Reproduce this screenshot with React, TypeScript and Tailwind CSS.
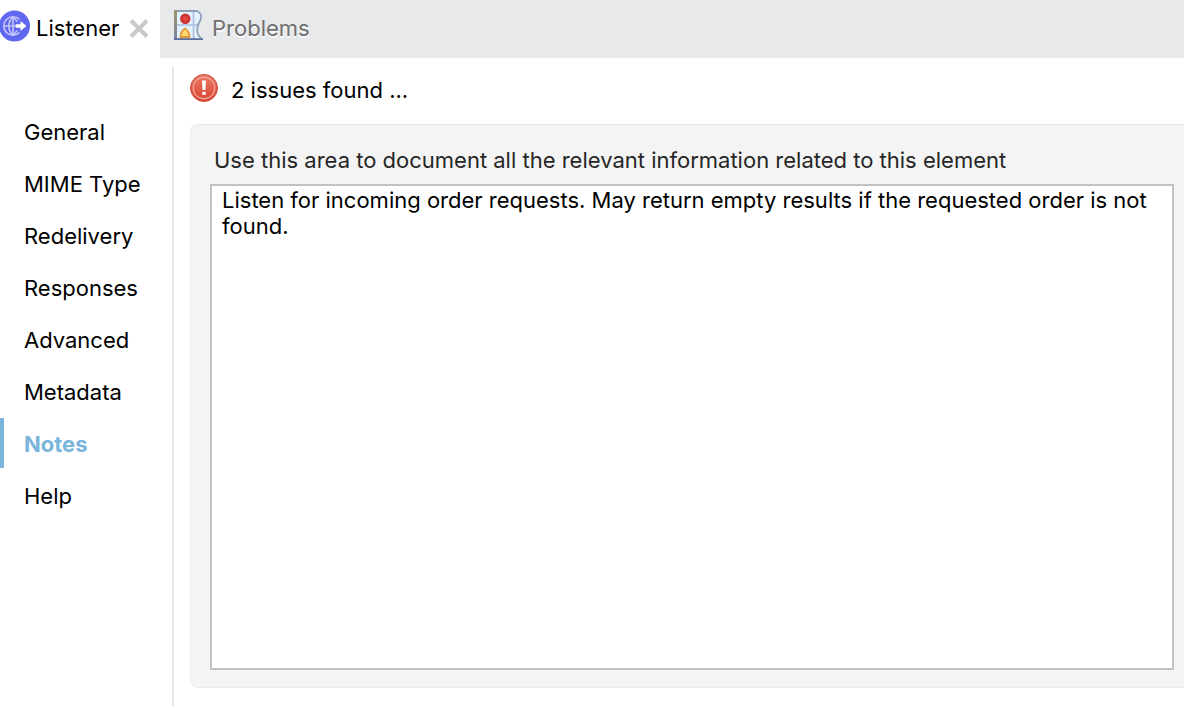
import { useState } from "react";

const sections = ["General", "MIME Type", "Redelivery", "Responses", "Advanced", "Metadata", "Notes", "Help"];

function ListenerIcon() {
    return (
        <svg className="-ml-px h-8 w-8 shrink-0" viewBox="0 0 32 32" fill="none" aria-hidden="true">
            <circle cx="15.5" cy="16" r="15.5" fill="#6068f0" />
            <g stroke="#c3c6fb" strokeWidth="1.6">
                <path d="M20.5 22.5A9.2 9.2 0 1 1 20.5 9.5" />
                <path d="M14 6.8c-5.6 5-5.6 13.4 0 18.4M14 6.8c2 1.600 3.400 3.400 4 5M14 25.200c2-1.600 3.400-3.400 4-5" />
                <path d="M14 6.800v18.400M5 16h11" />
            </g>
            <path d="M16.500 14.200h5v-3.200l6 5-6 5v-3.200h-5z" fill="#fff" />
        </svg>
    );
}

function ProblemsIcon() {
    return (
        <svg className="h-8 w-8 shrink-0" viewBox="0 0 32 32" fill="none" aria-hidden="true">
            <defs>
                <linearGradient id="page-edge" x1="0" y1="0" x2="0" y2="1">
                    <stop offset="0" stopColor="#9c9468" />
                    <stop offset="1" stopColor="#7c84a0" />
                </linearGradient>
                <radialGradient id="red-dot">
                    <stop offset="0" stopColor="#e8544e" />
                    <stop offset="1" stopColor="#c5282b" />
                </radialGradient>
            </defs>
            <path d="M1 1h22c6 3 4.500 8 2 12s-3 11 2 16H1z" fill="#e3f1fc" />
            <path d="M19.500 1v28M2 15h22" stroke="#a9bfe0" strokeWidth="1.600" />
            <path d="M2 1h21c6 3 4.500 8 2 12s-3 11 2 15" stroke="#8fa0bb" strokeWidth="1.800" />
            <path d="M0 0h3v30H0z" fill="url(#page-edge)" />
            <path d="M0 28.200h29V30H0z" fill="#596d9c" />
            <circle cx="11.300" cy="8.700" r="5.200" fill="url(#red-dot)" />
            <path d="M11 18.500c2.500 1.800 4.500 4.500 4.500 8.500h-9c0-4 2-6.700 4.500-8.500z" fill="#ffdc70" stroke="#e39a35" strokeWidth="1.800" strokeLinejoin="round" />
        </svg>
    );
}

function ErrorIcon() {
    return (
        <svg className="h-7 w-7 shrink-0" viewBox="0 0 28 28" fill="none" aria-hidden="true">
            <defs>
                <linearGradient id="error-fill" x1="0" y1="0" x2="0" y2="1">
                    <stop offset="0" stopColor="#ed7a65" />
                    <stop offset="1" stopColor="#d84434" />
                </linearGradient>
            </defs>
            <circle cx="14" cy="14" r="13.500" fill="url(#error-fill)" stroke="#cf4a3b" />
            <circle cx="14" cy="14" r="10.800" stroke="#f3a595" strokeWidth="1.200" />
            <path d="M12 6.500h4l-.6 9.500h-2.800z" fill="#fff" />
            <path d="M12.300 17.800h3.400v3h-3.400z" fill="#fff" />
        </svg>
    );
}

export default function App() {
    const [active, setActive] = useState("Notes");
    const [notes, setNotes] = useState(
        "Listen for incoming order requests. May return empty results if the requested order is not found."
    );

    return (
        <div className="flex min-h-screen flex-col bg-white font-['Inter',sans-serif] text-[22px] leading-[26px] text-black">
            <header className="flex h-[58px] bg-[#e8e9eb]">
                <div className="flex w-40 items-start gap-2 bg-white pt-[10px]">
                    <button className="flex h-8 items-center gap-[5px]">
                        <ListenerIcon />
                        <span className="pt-1">Listener</span>
                    </button>
                    <button aria-label="Close" className="flex h-8 items-center pt-1">
                        <svg className="h-6 w-6" viewBox="0 0 24 24" fill="none" aria-hidden="true">
                            <path d="M4 4.500l16 16M20 4.500l-16 16" stroke="#c9c9c9" strokeWidth="4" />
                        </svg>
                    </button>
                </div>
                <div className="pt-[10px] pl-[14px]">
                    <button className="flex h-8 items-center gap-[6px] text-[#6f6f6f]">
                        <ProblemsIcon />
                        <span className="pt-1 [text-shadow:0_2px_0_#fafafa]">Problems</span>
                    </button>
                </div>
            </header>

            <div className="flex grow">
                <nav className="flex w-[172px] shrink-0 flex-col gap-0.5 pt-12">
                    {sections.map((name) => (
                        <button
                            key={name}
                            onClick={() => setActive(name)}
                            className={`h-[50px] border-l-4 pt-0.5 pl-5 text-left ${
                                active === name ? "border-[#7ab5db] font-bold text-[#7ab5db]" : "border-transparent"
                            }`}
                        >
                            {name}
                        </button>
                    ))}
                </nav>

                <main className="mt-[9px] mb-0.5 flex min-w-0 grow flex-col border-l-2 border-[#e6e6e6] pt-[7px] pb-[18px] pl-4">
                    <div className="flex h-7 items-center gap-[13px]">
                        <ErrorIcon />
                        <p className="pt-1">2 issues found ...</p>
                    </div>

                    <div className="mt-[22px] flex grow flex-col rounded-l-lg border border-r-0 border-[#e6e6e6] border-b-[#ececec] border-l-[#ececec] bg-[#f4f4f4] pt-[22px] pr-[10px] pb-[17px] pl-[19px]">
                        <label htmlFor="notes" className="pl-1 text-[#262626]">
                            Use this area to document all the relevant information related to this element
                        </label>
                        <textarea
                            id="notes"
                            value={notes}
                            onChange={(e) => setNotes(e.target.value)}
                            className="mt-[11px] grow resize-none border-2 border-[#c2c2c2] bg-white px-[10px] pt-px outline-none"
                        />
                    </div>
                </main>
            </div>
        </div>
    );
}
